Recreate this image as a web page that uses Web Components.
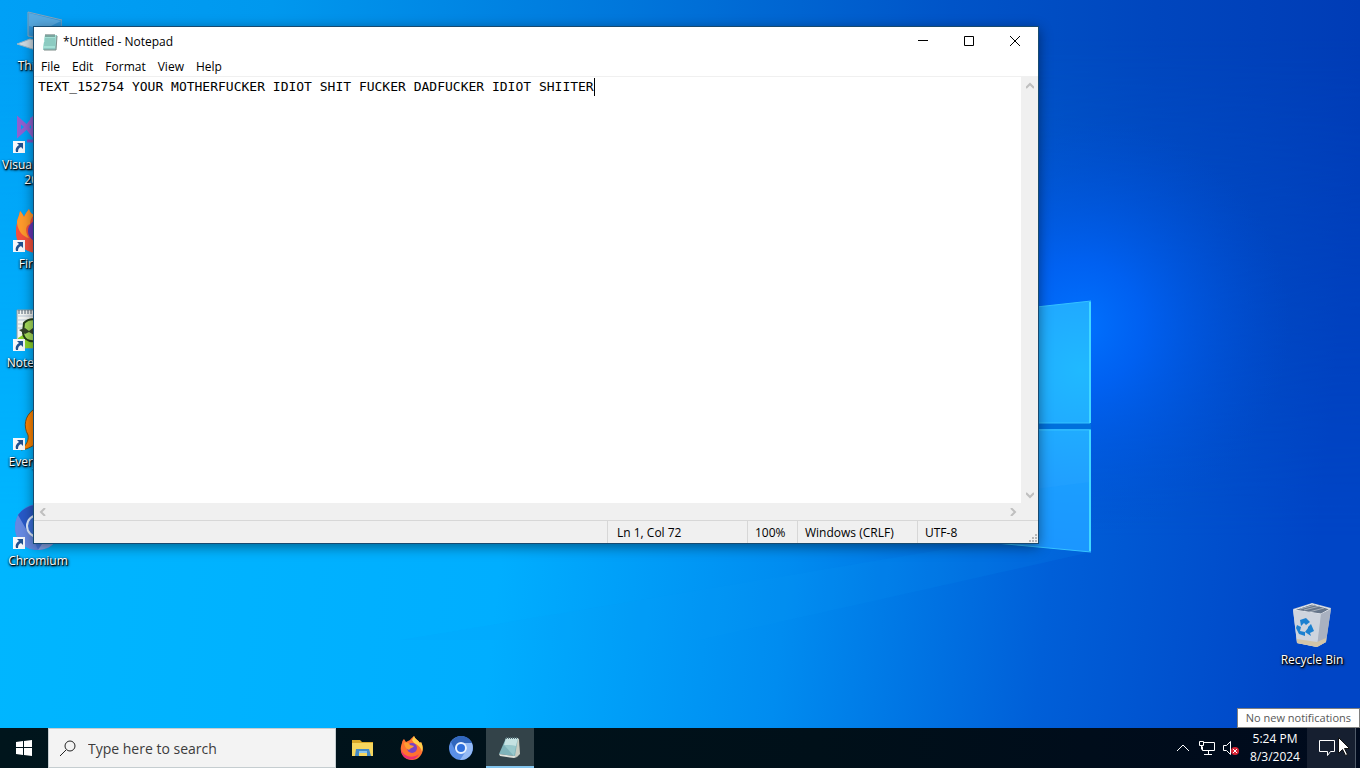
<!DOCTYPE html>
<html lang="en">
<head>
<meta charset="utf-8">
<meta name="viewport" content="width=device-width, initial-scale=1">
<title>Desktop</title>
<style>
html, body {
	height: 100%;
	margin: 0;
	overflow: hidden;
}

body {
	font: 12px/16px "Open Sans", "Noto Sans", sans-serif;
}
</style>
</head>
<body>
<desk-top>
	<wall-paper slot="wallpaper"></wall-paper>

	<desktop-icon slot="icons">
		<svg slot="image" viewBox="0 0 48 48">
			<path d="M14 4l34 8v22l-34-6z" fill="#2f93d6" stroke="#85a4bc"/>
			<path d="M15 5l32 8-18 9-14-4z" fill="#57a9e0"/>
			<path d="M3 36l13-5 28 7-13 7z" fill="#cfdce4" stroke="#9ab6c6"/>
		</svg>
		This PC
	</desktop-icon>
	<desktop-icon slot="icons" shortcut>
		<svg slot="image" viewBox="0 0 48 48" fill="none" stroke-width="4">
			<path d="M5 13v14l8-7 6-8v16l-6-8zM19 12l20 26 5-3V7l-5-3z" stroke="#9060d0"/>
			<path d="M13 34h12" stroke="#7a55c8" stroke-width="3"/>
		</svg>
		Visual Studio 2022
	</desktop-icon>
	<desktop-icon slot="icons" shortcut>
		<svg slot="image" viewBox="0 0 48 48">
			<path d="M3 17C3 13 5 11 6 5c2 2 3 4 4 6 1-3 3-5 5-8 1 3 2 5 5 6 14-2 25 7 25 18 0 11-9 20-21 20S2 39 2 27c0-4 0-7 1-10z" fill="#f4503c"/>
			<path d="M3 17C3 13 5 11 6 5c2 2 3 4 4 6 1-3 3-5 5-8 1 3 2 5 5 6-3 3-4 6-4 9-6 2-4 10-1 14-6-1-11-7-12-15z" fill="#ff9a2b"/>
			<circle cx="25" cy="25" r="11" fill="#6836b8"/>
		</svg>
		Firefox
	</desktop-icon>
	<desktop-icon slot="icons" shortcut>
		<svg slot="image" viewBox="0 0 48 48">
			<path d="M3 5h41v38H3z" fill="#f4f7f4" stroke="#8c9aa0"/>
			<path d="M4 11h39M4 15h39M4 19h39M4 23h39" stroke="#b9c7d4"/>
			<path d="M5 5v4m3-4v4m3-4v4m3-4v4m3-4v4m3-4v4" stroke="#4e6170"/>
			<path d="M4 33l13-8 26 6v12H4z" fill="#8cd52b"/>
			<path d="M10 18c5-5 12-5 17 0v15c-8 6-17 3-18-5z" fill="#a6dd5b" stroke="#243d18" stroke-width="2"/>
			<path d="M5 25l6-2 4 3 4-3 5 3-4 4-5-3-4 2z" fill="#35432a"/>
		</svg>
		Notepad++
	</desktop-icon>
	<desktop-icon slot="icons" shortcut>
		<svg slot="image" viewBox="0 0 48 48">
			<path d="M7 46c5-5 8-9 7-15-5-9-3-19 5-25 12-5 25 3 25 16S34 41 25 37c-5 5-11 8-18 9z" fill="#ff8400" stroke="#75501b"/>
			<circle cx="30" cy="21" r="9" fill="#8ecff5"/>
		</svg>
		Everything
	</desktop-icon>
	<desktop-icon slot="icons" shortcut>
		<svg slot="image" viewBox="0 0 48 48">
			<circle cx="24" cy="24" r="23" fill="#4878df"/>
			<path d="M5 10l13 22 6 15C8 47 1 36 1 24 1 18 3 14 5 10z" fill="#6689e1"/>
			<path d="M4 12C12 1 28-2 40 8l5 7H24c-8 0-13 8-9 16z" fill="#2859c7"/>
			<path d="M24 47l10-15 11-17c6 18-6 32-21 32z" fill="#8aa7ed"/>
			<circle cx="24" cy="23" r="11" fill="#3b70dd" stroke="#e0edff" stroke-width="2"/>
		</svg>
		Chromium
	</desktop-icon>

	<desktop-icon slot="corner">
		<svg slot="image" viewBox="0 0 48 48">
			<path d="M5 7l19-6 19 5-5 34-9 5-20-4z" fill="#c3c9d4"/>
			<path d="M6 8l18-6 18 5-9 5z" fill="#66758a" stroke="#e4e8ee"/>
			<path d="M12 7l15-4m-11 5 16-4m-11 6 15-4" stroke="#a6afba"/>
			<path d="M5 8l28 4-4 33-20-4z" fill="#ced4de"/>
			<path d="M33 12l10-5-5 33-9 5z" fill="#a9b1c0"/>
			<path d="M9 37l20 3 9-4v4l-9 5-20-4z" fill="#d3c5a8"/>
			<path d="M12 18l6-2 4 4-4 3-2-2-3 3zM20 25l3-3 3 7-4 2 1 3-6-4 3-4zM9 23l4 2-1 4 5 1v4l-6-2-3-6z" fill="#1c80d0"/>
		</svg>
		Recycle Bin
	</desktop-icon>

	<notepad-window slot="windows" heading="*Untitled - Notepad">TEXT_152754 YOUR MOTHERFUCKER IDIOT SHIT FUCKER DADFUCKER IDIOT SHIITER</notepad-window>

	<task-bar slot="taskbar">
		<task-button slot="apps" name="File Explorer">
			<svg width="24" height="24" viewBox="0 0 24 24">
				<path d="M1 4h8l2 2h11v14H1z" fill="#d9a829"/>
				<path d="M1 7h21v13H1z" fill="#f6d65e"/>
				<path d="M5 13h13l2 7h-4v-3H8v3H4z" fill="#4289c6"/>
				<path d="M8 15h8v2H8z" fill="#8cc4eb"/>
			</svg>
		</task-button>
		<task-button slot="apps" name="Firefox">
			<svg width="24" height="24" viewBox="0 0 24 24">
				<path d="M2 7c0-2 1-3 2-4l2 3 4-2c1-2 3-3 4-4 1 3 4 4 6 7l1-1c5 9-1 18-9 18S-2 17 2 7z" fill="#ff7131"/>
				<path d="M12 4l2-4c1 3 4 4 6 7l1-1c2 4 2 7 1 10-1-5-4-7-8-9z" fill="#ffd14b"/>
				<path d="M1 13c2 8 12 10 18 5-3 6-8 6-11 5-4-1-7-5-7-10z" fill="#ed2e73"/>
				<circle cx="12" cy="12" r="5" fill="#7943c5"/>
				<path d="M4 7c3-1 5 0 6 2l4 1c-1 2-4 2-5 4-2-1-4-2-5-7z" fill="#ff9c31"/>
			</svg>
		</task-button>
		<task-button slot="apps" name="Chromium">
			<svg width="24" height="24" viewBox="0 0 24 24">
				<circle cx="12" cy="12" r="12" fill="#5a8fe6"/>
				<path d="M2 6C8-3 19-1 23 7H12c-5 0-7 5-5 9z" fill="#3167bd"/>
				<path d="M23 7c3 9-3 17-12 17l6-9c2-3 1-6-2-8z" fill="#94baf5"/>
				<circle cx="12" cy="12" r="5" fill="#2f70dd" stroke="#e8f2ff" stroke-width="2"/>
			</svg>
		</task-button>
		<task-button slot="apps" name="Untitled - Notepad" active>
			<svg width="24" height="24" viewBox="0 0 24 24">
				<path d="M19 2l2 1 1 15-3 3-3-1z" fill="#c9cdc2"/>
				<path d="M8 2h12l-3 18-16-2z" fill="#7fb3b9"/>
				<path d="M8 2h12l-2 8-12-1z" fill="#c5e2e2"/>
				<path d="M6 9l12 1-2 10z" fill="#98c8cb"/>
				<path d="M1 18l16 2 2 1-3 1-14-2z" fill="#dfe3dc"/>
				<path d="M8 2h12" stroke="#536c74" stroke-dasharray="1 1" stroke-width="2"/>
			</svg>
		</task-button>
	</task-bar>
	<tool-tip slot="overlay">No new notifications</tool-tip>
	<mouse-pointer slot="overlay"></mouse-pointer>
</desk-top>

<script>
class Shell extends HTMLElement {
	constructor() {
		super();
		this.attachShadow({ mode: 'open' });
	}

	connectedCallback() {
		this.shadowRoot.innerHTML = this.render();
		this.connected();
	}

	connected() {}
}

class DeskTop extends Shell {
	render() {
		return `<slot name="wallpaper"></slot>
<main>
	<div class="icons"><slot name="icons"></slot></div>
	<div class="corner"><slot name="corner"></slot></div>
	<slot name="windows"></slot>
</main>
<slot name="taskbar"></slot>
<slot name="overlay"></slot>

<style>
:host {
	display: flex;
	flex-direction: column;
	height: 100vh;
	position: relative;
	overflow: hidden;
}

main {
	flex: 1;
	min-height: 0;
	position: relative;
	display: flex;
	justify-content: space-between;
}

.icons {
	display: grid;
	grid-auto-rows: 99px;
	align-content: start;
}

.corner {
	align-self: flex-end;
	height: 99px;
	padding: 0 10px 35px 0;
}
</style>`;
	}
}

class WallPaper extends Shell {
	render() {
		return `<svg viewBox="0 0 1360 768" preserveAspectRatio="xMidYMid slice" aria-hidden="true">
	<defs>
		<linearGradient id="base">
			<stop offset="0" stop-color="#00a0f6"/>
			<stop offset=".2" stop-color="#0098ee"/>
			<stop offset=".45" stop-color="#0078dc"/>
			<stop offset=".7" stop-color="#0054c8"/>
			<stop offset=".85" stop-color="#0046be"/>
			<stop offset="1" stop-color="#003cb6"/>
		</linearGradient>
		<linearGradient id="floor" gradientUnits="userSpaceOnUse" x1="0" y1="560" x2="1300" y2="700">
			<stop offset="0" stop-color="#00b6ff"/>
			<stop offset=".38" stop-color="#00aeff"/>
			<stop offset=".6" stop-color="#008cf0"/>
			<stop offset=".8" stop-color="#005fd8"/>
			<stop offset="1" stop-color="#0045c6"/>
		</linearGradient>
		<linearGradient id="fade" x1="0" y1="0" x2="0" y2="1">
			<stop offset=".05" stop-color="#fff" stop-opacity="0"/>
			<stop offset=".7" stop-color="#fff"/>
		</linearGradient>
		<mask id="lower"><rect width="1360" height="768" fill="url(#fade)"/></mask>
		<radialGradient id="glow" gradientUnits="userSpaceOnUse" cx="1080" cy="325" r="210">
			<stop offset="0" stop-color="#0072ff"/>
			<stop offset=".3" stop-color="#0064fa" stop-opacity=".8"/>
			<stop offset="1" stop-color="#004fd8" stop-opacity="0"/>
		</radialGradient>
		<radialGradient id="pane" gradientUnits="userSpaceOnUse" cx="1080" cy="370" r="190">
			<stop offset="0" stop-color="#20b9ff"/>
			<stop offset="1" stop-color="#208fff"/>
		</radialGradient>
	</defs>
	<rect width="1360" height="768" fill="url(#base)"/>
	<rect width="1360" height="768" fill="url(#floor)" mask="url(#lower)"/>
	<rect width="1360" height="768" fill="url(#glow)"/>
	<path d="M1091 552L700 640H400l600-100z" fill="#08a0f4" opacity=".12"/>
	<path d="M900 322l191-21v122H900zM900 429h191v123l-191-18z" fill="url(#pane)"/>
	<path d="M900 506l191-24v70l-191-18z" fill="#159cff" opacity=".5"/>
	<path d="M900 423h191v6H900z" fill="#0070dc"/>
	<path d="M900 322l191-21M900 423h190M900 430h190M900 534l191 18" fill="none" stroke="#35c2ff"/>
	<path d="M1090 302v121M1090 430v121" stroke="#40d8ff" stroke-width="2"/>
</svg>

<style>
:host {
	position: absolute;
	inset: 0;
}

svg {
	display: block;
	width: 100%;
	height: 100%;
}
</style>`;
	}
}

class DesktopIcon extends Shell {
	render() {
		const arrow = `<svg class="arrow" viewBox="0 0 12 12" aria-hidden="true">
	<path d="M0 0h12v12H0z" fill="#f5f7fa"/>
	<path d="M4 2h6v6L8 6c-2 1-3 2-3 5H3c-1-3 0-5 3-7z" fill="#21518f"/>
</svg>`;
		return `<button type="button">
	<span class="image"><slot name="image"></slot>${this.hasAttribute('shortcut') ? arrow : ''}</span>
	<span class="label"><slot></slot></span>
</button>

<style>
:host {
	display: block;
	width: 76px;
}

button {
	display: flex;
	flex-direction: column;
	align-items: center;
	gap: 2px;
	width: 100%;
	padding: 8px 0 0;
	border: 0;
	background: none;
	font: 12px/15px "Open Sans", "Noto Sans", sans-serif;
	color: #fff;
	text-shadow: 1px 1px 1px #000, 0 1px 2px #000, 1px 1px 3px #000;
}

.image {
	position: relative;
	width: 48px;
	height: 48px;
}

::slotted(svg) {
	display: block;
	width: 48px;
	height: 48px;
}

/* the shortcut badge lies over the lower left of the picture */
.arrow {
	position: absolute;
	left: -1px;
	bottom: 2px;
	width: 12px;
	height: 12px;
}
</style>`;
	}
}

class CaptionButton extends Shell {
	render() {
		const shapes = {
			Minimize: 'M0 4.5h10',
			Maximize: 'M.5 .5h9v9h-9z',
			Close: 'M0 0l10 10M10 0L0 10'
		};
		const name = this.getAttribute('name');
		return `<button type="button" aria-label="${name}">
	<svg width="10" height="10" viewBox="0 0 10 10"><path d="${shapes[name]}" fill="none" stroke="#000"/></svg>
</button>

<style>
:host {
	display: flex;
	width: 46px;
	height: 28px;
}

button {
	flex: 1;
	display: grid;
	place-items: center;
	padding: 0;
	border: 0;
	background: none;
}

svg {
	overflow: visible;
}
</style>`;
	}
}

class ScrollArrows extends Shell {
	render() {
		const vertical = this.hasAttribute('vertical');
		const back = vertical ? 'M0 6l4-4 4 4' : 'M6 0L2 4l4 4';
		const forward = vertical ? 'M0 2l4 4 4-4' : 'M2 0l4 4-4 4';
		const button = (label, d) => `<button type="button" aria-label="${label}">
	<svg width="8" height="8" viewBox="0 0 8 8"><path d="${d}" fill="none" stroke="#bfbfbf" stroke-width="2"/></svg>
</button>`;
		return `${button('Scroll back', back)}${button('Scroll forward', forward)}

<style>
:host {
	display: flex;
	justify-content: space-between;
	background: #f0f0f0;
}

:host([vertical]) {
	flex-direction: column;
}

button {
	display: grid;
	place-items: center;
	width: 17px;
	height: 17px;
	padding: 0;
	border: 0;
	background: none;
}
</style>`;
	}
}

class NotepadWindow extends Shell {
	render() {
		const menus = ['File', 'Edit', 'Format', 'View', 'Help'];
		return `<header>
	<svg width="16" height="18" viewBox="0 0 16 18" aria-hidden="true">
		<path d="M3 2h12l-1 15H1z" fill="#8cc7c2"/>
		<path d="M3 2h11l-1 13H1z" fill="#a4e0d5"/>
		<path d="M3 6h10M3 8h10M2 10h11M2 12h11" stroke="#75b6ad"/>
		<path d="M15 3l-1 14H2" fill="none" stroke="#7d8b87"/>
		<path d="M4 1v3m2-3v3m2-3v3m2-3v3m2-3v3" stroke="#506b68"/>
	</svg>
	<h1>${this.getAttribute('heading')}</h1>
	<caption-button name="Minimize"></caption-button>
	<caption-button name="Maximize"></caption-button>
	<caption-button name="Close"></caption-button>
</header>
<nav>${menus.map((name) => `<button type="button">${name}</button>`).join('')}</nav>
<div class="editor">
	<div class="page">
		<textarea aria-label="Text editor" spellcheck="false" wrap="off" rows="1"></textarea>
		<span class="caret"></span>
	</div>
	<scroll-arrows vertical></scroll-arrows>
	<scroll-arrows></scroll-arrows>
</div>
<footer>
	<span></span>
	<span>Ln 1, Col 72</span>
	<span>100%</span>
	<span>Windows (CRLF)</span>
	<span>UTF-8
		<svg width="9" height="9" viewBox="0 0 9 9" aria-hidden="true">
			<path d="M6 0h2v2H6zM3 3h2v2H3zM6 3h2v2H6zM0 6h2v2H0zM3 6h2v2H3zM6 6h2v2H6z" fill="#b8b8b8"/>
		</svg>
	</span>
</footer>

<style>
:host {
	position: absolute;
	inset: 26px 321px 184px 33px;
	display: flex;
	flex-direction: column;
	box-sizing: border-box;
	border: 1px solid #174a70;
	background: #fff;
	color: #000;
	box-shadow: 0 3px 12px rgba(0, 0, 0, .45);
}

header {
	display: flex;
	height: 30px;
}

header > svg {
	align-self: center;
	margin: 0 5px 0 8px;
}

h1 {
	flex: 1;
	margin: 0;
	font: 12px/30px "Open Sans", "Noto Sans", sans-serif;
}

nav {
	display: flex;
	height: 19px;
	padding-left: 1px;
	border-bottom: 1px solid #f0f0f0;
}

nav button {
	padding: 0 6px;
	border: 0;
	background: none;
	font: 12px/20px "Open Sans", "Noto Sans", sans-serif;
	color: #000;
}

.editor {
	flex: 1;
	min-height: 0;
	display: grid;
	grid-template: 1fr 17px / 1fr 17px;
	background: #f0f0f0;
}

.page {
	display: flex;
	min-width: 0;
	padding: 1px 4px;
	background: #fff;
}

textarea {
	field-sizing: content;
	padding: 0;
	border: 0;
	outline: 0;
	resize: none;
	overflow: hidden;
	font: 13px/18px "DejaVu Sans Mono", monospace;
	color: #000;
	background: none;
}

.caret {
	width: 1px;
	height: 18px;
	background: #000;
}

footer {
	display: grid;
	grid-template-columns: 1fr 140px 50px 120px 121px;
	height: 22px;
	border-top: 1px solid #d7d7d7;
	background: #f0f0f0;
	line-height: 24px;
}

footer span {
	height: 22px;
	padding-left: 7px;
}

footer span + span {
	border-left: 1px solid #d7d7d7;
}

footer span:nth-child(2) {
	padding-left: 9px;
}

footer span:last-child {
	display: flex;
	justify-content: space-between;
}

footer svg {
	align-self: flex-end;
}
</style>`;
	}

	connected() {
		this.shadowRoot.querySelector('textarea').value = this.textContent.trim();
	}
}

class TaskButton extends Shell {
	render() {
		return `<button type="button" aria-label="${this.getAttribute('name')}"><slot></slot></button>

<style>
:host {
	display: flex;
	width: 48px;
}

button {
	flex: 1;
	display: grid;
	place-items: center;
	padding: 0;
	border: 0;
	background: none;
}

:host([active]) button {
	background: #334349;
	box-shadow: inset 0 -2px #83c5ee;
}
</style>`;
	}
}

class TaskBar extends Shell {
	render() {
		return `<button class="start" type="button" aria-label="Start">
	<svg width="16" height="16" viewBox="0 0 16 16"><path d="M0 2l7-1v6H0zM8 1l8-1v7H8zM0 8h7v7l-7-1zM8 8h8v8l-8-1z" fill="#fff"/></svg>
</button>
<label class="search">
	<svg width="16" height="16" viewBox="0 0 16 16" fill="none" stroke="#222" aria-hidden="true">
		<circle cx="10" cy="6" r="5"/><path d="M6 10l-6 6"/>
	</svg>
	<input type="text" placeholder="Type here to search" aria-label="Search">
</label>
<div class="apps"><slot name="apps"></slot></div>
<div class="tray">
	<button type="button" aria-label="Show hidden icons">
		<svg width="16" height="16" viewBox="0 0 16 16"><path d="M2 11l6-6 6 6" fill="none" stroke="#fff"/></svg>
	</button>
	<button type="button" aria-label="Network">
		<svg width="16" height="16" viewBox="0 0 16 16" fill="none" stroke="#fff"><path d="M4.500 2.500h11v8h-12v-4M.5 1.500h4v4h-4zM2.500 5.500v4M9.500 10.500v4M5 14.500h8"/></svg>
	</button>
	<button type="button" aria-label="Volume muted">
		<svg width="16" height="16" viewBox="0 0 16 16"><path d="M.5 5.500h3l4-4v13l-4-4h-3z" fill="none" stroke="#fff"/><circle cx="12" cy="11" r="4" fill="#d92535"/><path d="M10 9l4 4m0-4l-4 4" stroke="#fff"/></svg>
	</button>
</div>
<button class="clock" type="button"><time>5:24 PM</time><time>8/3/2024</time></button>
<button class="notes" type="button" aria-label="Notifications">
	<svg width="16" height="16" viewBox="0 0 16 16"><path d="M.5 .5h15v11h-4l-3 4v-4h-8z" fill="none" stroke="#fff"/></svg>
</button>
<button class="peek" type="button" aria-label="Show desktop"></button>

<style>
:host {
	position: relative;
	display: flex;
	height: 40px;
	background: linear-gradient(90deg, #00151c, #001019 60%, #000a1d);
	color: #fff;
}

button {
	display: grid;
	place-items: center;
	padding: 0;
	border: 0;
	background: none;
	color: inherit;
	font: 12px/18px "Open Sans", "Noto Sans", sans-serif;
}

.start {
	width: 48px;
}

.search {
	display: flex;
	align-items: center;
	gap: 12px;
	width: 288px;
	box-sizing: border-box;
	padding: 0 11px;
	border: 1px solid #c5cdd0;
	background: #f3f3f3;
}

input {
	flex: 1;
	min-width: 0;
	padding: 2px 0 0;
	border: 0;
	outline: 0;
	background: none;
	font: 14px/20px "Open Sans", "Noto Sans", sans-serif;
}

input::placeholder {
	color: #3c3c3c;
}

.apps {
	flex: 1;
	display: flex;
	gap: 1px;
	padding-left: 3px;
}

.tray {
	display: flex;
}

.tray button {
	width: 24px;
}

.clock {
	width: 64px;
	align-content: center;
}

.notes {
	width: 48px;
	padding-right: 8px;
	background: #161f30;
}

.peek {
	width: 5px;
	border-left: 1px solid #4f5a68;
}
</style>`;
	}
}

class ToolTip extends Shell {
	render() {
		return `<slot></slot>

<style>
:host {
	position: absolute;
	right: 0;
	bottom: 40px;
	padding: 0 8px 1px;
	border: 1px solid #808080;
	background: #fff;
	color: #575757;
	font-size: 11px;
	line-height: 17px;
}
</style>`;
	}
}

class MousePointer extends Shell {
	render() {
		return `<svg width="12" height="19" viewBox="0 0 12 19" aria-hidden="true">
	<path d="M.5 .5v16l4-4 3 6 2-1-3-6h5z" fill="#fff" stroke="#111"/>
</svg>

<style>
:host {
	position: absolute;
	right: 10px;
	bottom: 12px;
	height: 19px;
}
</style>`;
	}
}

customElements.define('desk-top', DeskTop);
customElements.define('wall-paper', WallPaper);
customElements.define('desktop-icon', DesktopIcon);
customElements.define('caption-button', CaptionButton);
customElements.define('scroll-arrows', ScrollArrows);
customElements.define('notepad-window', NotepadWindow);
customElements.define('task-button', TaskButton);
customElements.define('task-bar', TaskBar);
customElements.define('tool-tip', ToolTip);
customElements.define('mouse-pointer', MousePointer);
</script>
</body>
</html>
